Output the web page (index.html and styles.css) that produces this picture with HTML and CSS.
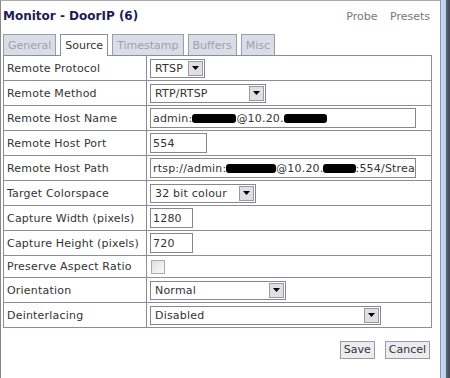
FILE: index.html
```html
<!DOCTYPE html>
<html lang="en">
<head>
    <meta charset="UTF-8">
    <title>Monitor - DoorIP (6)</title>
    <link rel="stylesheet" href="styles.css">
</head>
<body>
    <div class="window">
        <div class="page">
            <div class="header">
                <h2>Monitor - DoorIP (6)</h2>
                <div class="links">
                    <a href="#">Probe</a>
                    <a href="#">Presets</a>
                </div>
            </div>
            <ul class="tabs">
                <li>General</li>
                <li class="active">Source</li>
                <li>Timestamp</li>
                <li>Buffers</li>
                <li>Misc</li>
            </ul>
            <table class="settings">
                <tr>
                    <td class="label">Remote Protocol</td>
                    <td><div class="select w-protocol"><span>RTSP</span><i class="arrow"><svg width="7" height="4" viewBox="0 0 7 4"><path d="M0 0h7L3.5 4z"/></svg></i></div></td>
                </tr>
                <tr>
                    <td class="label">Remote Method</td>
                    <td><div class="select w-method"><span>RTP/RTSP</span><i class="arrow"><svg width="7" height="4" viewBox="0 0 7 4"><path d="M0 0h7L3.5 4z"/></svg></i></div></td>
                </tr>
                <tr>
                    <td class="label">Remote Host Name</td>
                    <td><div class="text w-long">admin:<span class="redact r1"></span>@10.20.<span class="redact r2"></span></div></td>
                </tr>
                <tr>
                    <td class="label">Remote Host Port</td>
                    <td><div class="text w-port">554</div></td>
                </tr>
                <tr>
                    <td class="label">Remote Host Path</td>
                    <td><div class="text w-long">rtsp://admin:<span class="redact r3"></span>@10.20.<span class="redact r4"></span>:554/Strea</div></td>
                </tr>
                <tr>
                    <td class="label">Target Colorspace</td>
                    <td><div class="select w-colour"><span>32 bit colour</span><i class="arrow"><svg width="7" height="4" viewBox="0 0 7 4"><path d="M0 0h7L3.5 4z"/></svg></i></div></td>
                </tr>
                <tr>
                    <td class="label">Capture Width (pixels)</td>
                    <td><div class="text w-size">1280</div></td>
                </tr>
                <tr>
                    <td class="label">Capture Height (pixels)</td>
                    <td><div class="text w-size">720</div></td>
                </tr>
                <tr class="short">
                    <td class="label">Preserve Aspect Ratio</td>
                    <td><div class="checkbox"></div></td>
                </tr>
                <tr>
                    <td class="label">Orientation</td>
                    <td><div class="select w-orient"><span>Normal</span><i class="arrow"><svg width="7" height="4" viewBox="0 0 7 4"><path d="M0 0h7L3.5 4z"/></svg></i></div></td>
                </tr>
                <tr>
                    <td class="label">Deinterlacing</td>
                    <td><div class="select w-deint"><span>Disabled</span><i class="arrow"><svg width="7" height="4" viewBox="0 0 7 4"><path d="M0 0h7L3.5 4z"/></svg></i></div></td>
                </tr>
            </table>
            <div class="buttons">
                <button>Save</button>
                <button>Cancel</button>
            </div>
        </div>
        <div class="frame"></div>
    </div>
</body>
</html>
```

FILE: styles.css
```css
html, body {
    margin: 0;
    height: 100%;
    background: #ffffff;
    font-family: "DejaVu Sans", Verdana, sans-serif;
    font-size: 11px;
    color: #333;
}
.window {
    display: flex;
    height: 100%;
}
.page {
    width: 428px;
    padding: 0 10px 0 1px;
    border-left: 1px solid #888;
    border-top: 1px solid #aaa;
}
.frame {
    flex: 1;
    border-left: 1px solid #8a96a4;
    background: linear-gradient(to right, #c9dcf2 0, #b8cfe9 5px, #5a6878 5px, #3c4652 100%);
}
.header {
    display: flex;
    justify-content: space-between;
    align-items: baseline;
    padding: 8px 0 0 1px;
}
.header h2 {
    margin: 0;
    font-size: 12px;
    font-weight: bold;
    color: #1c1c58;
}
.links a {
    color: #777;
    text-decoration: none;
    margin-left: 9px;
}
.tabs {
    list-style: none;
    display: flex;
    gap: 4px;
    margin: 11px 0 0 1px;
    padding: 0;
}
.tabs li {
    border: 1px solid #9c9cac;
    border-bottom: none;
    background: #dcdce6;
    color: #a0a0aa;
    padding: 4px 4px 3px;
    line-height: 13px;
}
.tabs li.active {
    background: #fff;
    color: #333;
    border-color: #8c8c9c;
    position: relative;
    margin-bottom: -1px;
    padding-bottom: 4px;
}
.settings {
    border-collapse: collapse;
    width: 429px;
    margin-left: 1px;
}
.settings td {
    border: 1px solid #8c8ca0;
    height: 24px;
    padding: 0 3px;
    letter-spacing: 0.2px;
}
.settings tr.short td {
    height: 21px;
}
.settings td.label {
    width: 136px;
    padding-left: 3px;
}
.select, .text {
    display: flex;
    align-items: center;
    box-sizing: border-box;
    height: 19px;
    border: 1px solid #888;
    background: #fff;
    color: #333;
    white-space: nowrap;
    overflow: hidden;
}
.select span {
    flex: 1;
    padding-left: 4px;
}
.select .arrow {
    display: flex;
    align-items: center;
    justify-content: center;
    width: 15px;
    height: 15px;
    margin-right: 1px;
    background: #e0e0e4;
    border: 1px solid #9a9aa6;
    box-sizing: border-box;
}
.text {
    padding-left: 2px;
    height: 20px;
}
.redact {
    display: inline-block;
    height: 9px;
    background: #000;
    border-radius: 3px;
}
.r1 { width: 44px; }
.r2 { width: 43px; }
.r3 { width: 62px; }
.r4 { width: 40px; }
.w-protocol { width: 55px; }
.w-method { width: 116px; }
.w-long { width: 266px; }
.w-port { width: 57px; }
.w-colour { width: 106px; }
.w-size { width: 43px; }
.w-orient { width: 136px; }
.w-deint { width: 231px; }
.checkbox {
    width: 12px;
    height: 12px;
    margin-left: 1px;
    border: 1px solid #a8a8b0;
    background: linear-gradient(135deg, #e0e0e0, #fafafa);
}
.buttons {
    display: flex;
    justify-content: flex-end;
    gap: 10px;
    margin-top: 13px;
}
.buttons button {
    font-family: "DejaVu Sans", Verdana, sans-serif;
    font-size: 11px;
    color: #333;
    background: #ececf0;
    border: 1px solid #9a9aa8;
    padding: 1px 3px;
    height: 18px;
    line-height: 14px;
}
```
